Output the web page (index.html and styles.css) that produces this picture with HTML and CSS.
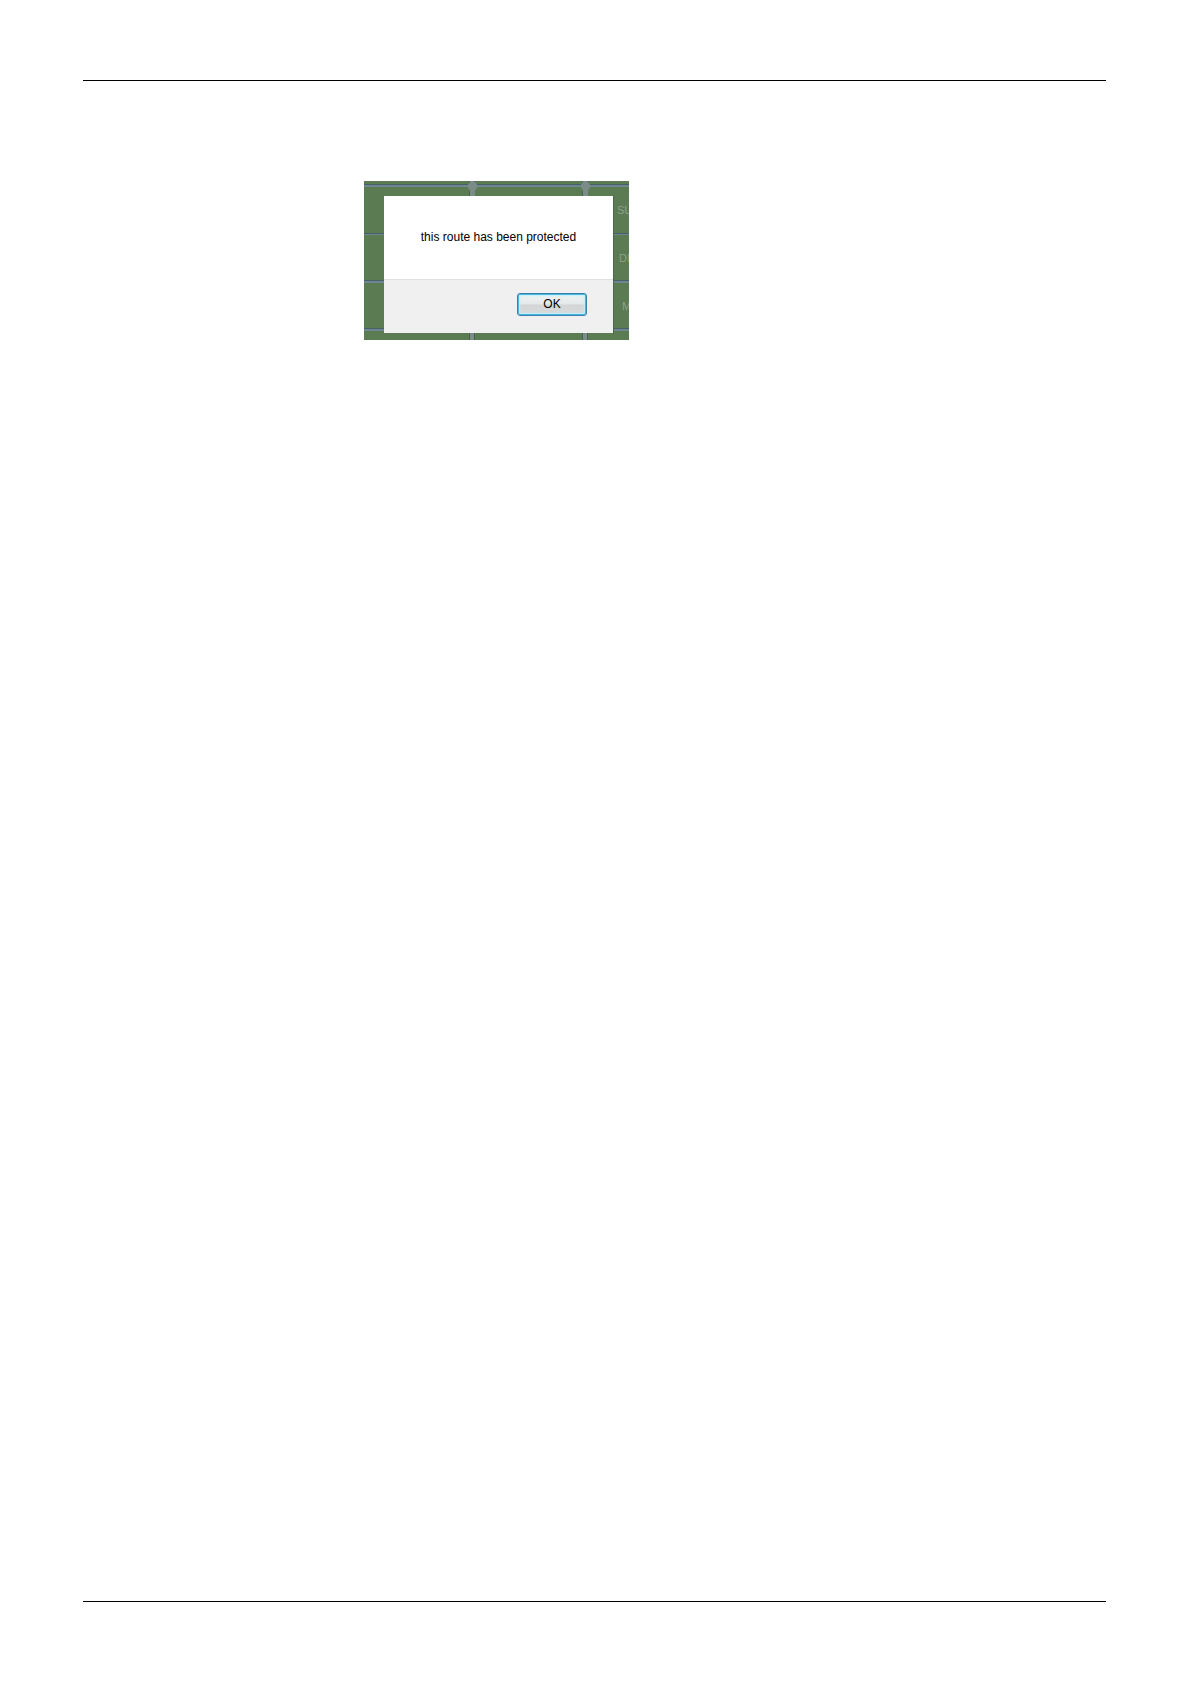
FILE: index.html
```html
<!DOCTYPE html>
<html lang="en">
<head>
    <meta charset="UTF-8">
    <meta name="viewport" content="width=device-width, initial-scale=1.0">
    <title>Route protected</title>
    <link rel="stylesheet" href="styles.css">
</head>
<body>
    <div class="sheet">
        <main class="content">
            <div class="screen">
                <!-- dimmed track grid behind the dialog -->
                <svg class="grid" width="265" height="159" viewBox="0 0 265 159" aria-hidden="true">
                    <rect width="265" height="159" fill="#5b7b52"/>
                    <g fill="#6c8790">
                        <rect y="4" width="265" height="2"/>
                        <rect y="53" width="265" height="1"/>
                        <rect y="100" width="265" height="2"/>
                        <rect y="148" width="265" height="2"/>
                    </g>
                    <g fill="#466065">
                        <rect y="3" width="265" height="1"/>
                        <rect y="52" width="265" height="1"/>
                        <rect y="99" width="265" height="1"/>
                        <rect y="147" width="265" height="1"/>
                    </g>
                    <g fill="#46605a">
                        <rect x="105" width="6" height="159"/>
                        <rect x="218" width="6" height="159"/>
                    </g>
                    <g fill="#7b8b88">
                        <rect x="106" width="4" height="159"/>
                        <rect x="219" width="4" height="159"/>
                        <path d="M106 1h5l3 4-3 5v5h-5v-5l-3-5z"/>
                        <path d="M219 1h5l3 4-3 5v5h-5v-5l-3-5z"/>
                    </g>
                    <rect x="249" y="14" width="1" height="139" fill="#4c6848"/>
                    <g class="grid-label">
                        <text x="253" y="33">SU</text>
                        <text x="255" y="81">DN</text>
                        <text x="258" y="129">M</text>
                    </g>
                </svg>

                <div class="dialog" role="alertdialog" aria-labelledby="message">
                    <p class="message" id="message">this route has been protected</p>
                    <div class="actions">
                        <button class="ok-btn" type="button">OK</button>
                    </div>
                </div>
            </div>
        </main>
    </div>
</body>
</html>
```

FILE: styles.css
```css
* {
    box-sizing: border-box;
}

body {
    margin: 0;
    background-color: #fff;
    font-family: "Liberation Sans", Arial, sans-serif;
    font-size: 12px;
    color: #000;
}

.sheet {
    display: flex;
    min-height: 100vh;
    padding: 80px 84px 82px 83px;
}

.content {
    flex: 1;
    padding: 100px 0 100px 281px;
    border-top: 1px solid #000;
    border-bottom: 1px solid #000;
}

.screen {
    position: relative;
    width: 265px;
}

.grid {
    display: block;
}

.grid-label {
    font-size: 11px;
    fill: #90a18c;
}

.dialog {
    position: absolute;
    top: 15px;
    left: 20px;
    width: 229px;
    background-color: #fff;
}

.message {
    margin: 0;
    padding: 33px 0 34px;
    line-height: 16px;
    text-align: center;
}

.actions {
    display: flex;
    justify-content: flex-end;
    padding: 13px 26px 17px;
    border-top: 1px solid #dfdfdf;
    background-color: #f0f0f0;
}

.ok-btn {
    width: 70px;
    height: 23px;
    padding: 0 0 2px;
    border: 1px solid #3c7fb1;
    border-radius: 3px;
    background: linear-gradient(#f0f4f4, #e4e8e8 48%, #d3d5d6 52%, #d8dada);
    box-shadow: inset 0 0 0 1px #46b8dc, inset 0 0 2px 2px #c4f0f8;
    font-family: inherit;
    font-size: 12px;
    color: #000;
    cursor: pointer;
}
```
